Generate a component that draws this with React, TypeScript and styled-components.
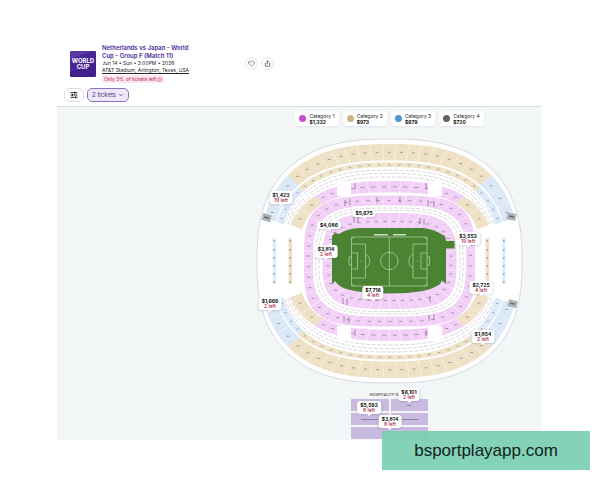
import React from "react";
import styled, { createGlobalStyle } from "styled-components";
import { ChevronDown, Heart, Info, SlidersHorizontal } from "lucide-react";

const GlobalStyle = createGlobalStyle`
  * { box-sizing: border-box; }
  body {
    margin: 0;
    background: #fff;
    color: #24242b;
    font-family: Inter, "Liberation Sans", sans-serif;
  }
  button { font: inherit; color: inherit; margin: 0; cursor: pointer; }
`;

/* ---------- stadium geometry ---------- */

const CX = 389.5;
const CY = 261;

type Curve = { a: number; b: number; n: number };
type Point = [number, number];

const curve = (a: number, b: number, n = 2.55): Curve => ({ a, b, n });

function at(c: Curve, deg: number): Point {
  const t = (deg * Math.PI) / 180;
  const cos = Math.cos(t);
  const sin = Math.sin(t);
  const r = Math.pow(
    Math.pow(Math.abs(cos) / c.a, c.n) + Math.pow(Math.abs(sin) / c.b, c.n),
    -1 / c.n
  );
  return [CX + r * cos, CY - r * sin];
}

function trace(c: Curve, from: number, to: number): Point[] {
  const steps = Math.max(2, Math.ceil(Math.abs(to - from) / 2));
  return Array.from({ length: steps + 1 }, (_, i) => at(c, from + ((to - from) * i) / steps));
}

const toPath = (pts: Point[]) =>
  "M" + pts.map(([x, y]) => `${x.toFixed(2)} ${y.toFixed(2)}`).join("L");

/** Angles that cut the curve into pieces of equal length. */
function splits(c: Curve, from: number, to: number, count: number): number[] {
  const steps = 360;
  const lengths = [0];
  let prev = at(c, from);
  for (let i = 1; i <= steps; i++) {
    const p = at(c, from + ((to - from) * i) / steps);
    lengths.push(lengths[i - 1] + Math.hypot(p[0] - prev[0], p[1] - prev[1]));
    prev = p;
  }
  const result: number[] = [];
  let k = 0;
  for (let i = 0; i <= count; i++) {
    const goal = (lengths[steps] * i) / count;
    while (k < steps && lengths[k] < goal) k++;
    result.push(from + ((to - from) * k) / steps);
  }
  return result;
}

const TAN = "#efe1c6";
const BLUE = "#dae8f8";
const PINK = "#f1cff6";

type BandProps = {
  outer: Curve;
  inner: Curve;
  from: number;
  to: number;
  count: number;
  fill: string;
  mark?: number;
};

function Band({ outer, inner, from, to, count, fill, mark = 3 }: BandProps) {
  const mid = curve((outer.a + inner.a) / 2, (outer.b + inner.b) / 2, (outer.n + inner.n) / 2);
  const cuts = splits(mid, from, to, count);
  return (
    <g>
      <path d={toPath([...trace(outer, from, to), ...trace(inner, to, from)]) + "Z"} fill={fill} />
      {cuts.slice(1, -1).map((d) => (
        <path key={d} d={toPath([at(outer, d), at(inner, d)])} stroke="#fff" strokeWidth=".6" opacity=".8" />
      ))}
      {cuts.slice(1).map((d, i) => {
        const [x, y] = at(mid, (d + cuts[i]) / 2);
        return (
          <path key={i} d={`M${x - mark / 2} ${y}h${mark}`} stroke="#71656f" strokeWidth="1" opacity=".55" />
        );
      })}
    </g>
  );
}

function Dashes({ c, from, to }: { c: Curve; from: number; to: number }) {
  return (
    <path
      d={toPath(trace(c, from, to))}
      fill="none"
      stroke="#cdcdd3"
      strokeWidth=".8"
      strokeDasharray="4 1.6"
    />
  );
}

const bowl = [curve(129, 117), curve(118, 100.5)];
const ledge = [curve(117, 98.5), curve(110, 94)];
const club = [curve(104, 80, 2.6), curve(91, 68.5, 2.9)];
const middle = [curve(85.5, 65.5, 3.6), curve(76.5, 55.5, 3.4)];
const lower = [curve(67, 48, 3.4), curve(56, 31, 3.4)];

const halves = [0, 180];

function Strip({ x, fill }: { x: number; fill: string }) {
  return (
    <g>
      <rect x={x} y="238" width="3.6" height="46" fill={fill} />
      {[240, 249, 257, 265, 273, 281].map((y) => (
        <rect key={y} x={x + 1} y={y} width="1.6" height="1.6" fill="#76808a" opacity=".7" />
      ))}
    </g>
  );
}

function StadiumDrawing() {
  return (
    <svg viewBox="256 138 267 246" width="267" height="246" role="img" aria-label="Stadium seating map">
      <path d={toPath(trace(curve(132.5, 122), 0, 360)) + "Z"} fill="#fff" stroke="#d2d5da" strokeWidth=".9" />
      {halves.map((h) => (
        <g key={h}>
          <Band outer={bowl[0]} inner={bowl[1]} from={h + 19} to={h + 40} count={3} fill={BLUE} />
          <Band outer={bowl[0]} inner={bowl[1]} from={h + 40} to={h + 140} count={17} fill={TAN} />
          <Band outer={bowl[0]} inner={bowl[1]} from={h + 140} to={h + 161} count={3} fill={BLUE} />
          <Band outer={ledge[0]} inner={ledge[1]} from={h + 19} to={h + 39} count={4} fill={BLUE} mark={2} />
          <Band outer={ledge[0]} inner={ledge[1]} from={h + 39} to={h + 141} count={19} fill={TAN} mark={2} />
          <Band outer={ledge[0]} inner={ledge[1]} from={h + 141} to={h + 161} count={4} fill={BLUE} mark={2} />
          <Dashes c={curve(109, 91)} from={h + 20} to={h + 160} />
          <Dashes c={curve(106.5, 87.5)} from={h + 20} to={h + 160} />
          <Dashes c={curve(104.5, 84)} from={h + 20} to={h + 160} />
          <Band outer={club[0]} inner={club[1]} from={h + 20} to={h + 41} count={2} fill={TAN} />
          <Band outer={club[0]} inner={club[1]} from={h + 41} to={h + 59} count={3} fill={PINK} />
          <Band outer={club[0]} inner={club[1]} from={h + 59} to={h + 121} count={8} fill={PINK} mark={4} />
          <Band outer={club[0]} inner={club[1]} from={h + 121} to={h + 139} count={3} fill={PINK} />
          <Band outer={club[0]} inner={club[1]} from={h + 139} to={h + 160} count={2} fill={TAN} />
        </g>
      ))}
      {[337, 428].map((x) =>
        [181, 326].map((y) => <rect key={`${x}-${y}`} x={x} y={y} width="14" height="15" fill="#fff" />)
      )}
      <Band outer={middle[0]} inner={middle[1]} from={0} to={360} count={46} fill={PINK} />
      <Dashes c={curve(73.5, 53, 3.4)} from={0} to={360} />
      <Dashes c={curve(70.5, 50.5, 3.4)} from={0} to={360} />
      <Band outer={lower[0]} inner={lower[1]} from={0} to={360} count={40} fill={PINK} />
      {[
        [355, 183], [426, 183], [355, 330], [426, 330], [345, 200], [350, 199], [377, 197], [400, 197],
        [428, 200], [434, 201], [344, 316], [349, 317], [429, 315], [434, 314], [354, 217], [358, 217],
        [420, 218], [424, 219], [343, 298], [347, 299], [430, 296],
      ].map(([x, y]) => (
        <path key={`${x}-${y}`} d={`M${x} ${y}v6`} stroke="#6f5577" strokeWidth="1" opacity=".6" />
      ))}

      <Strip x={272.5} fill="#dfeefa" />
      <Strip x={288.5} fill={TAN} />
      <Strip x={485.5} fill={TAN} />
      <Strip x={502} fill="#dfeefa" />
      {[
        [262, 214, 15],
        [507, 213, 10],
        [508, 300, 12],
      ].map(([x, y, r]) => (
        <g key={`${x}-${y}`} transform={`rotate(${r} ${x + 4} ${y + 4})`}>
          <rect x={x} y={y} width="9" height="7" fill="#aeb2b6" />
          <path d={`M${x + 2} ${y + 3.5}h5`} stroke="#666" strokeWidth="1.4" />
        </g>
      ))}

      <path
        d="M332 236L335 233L339 234Q346 229 359 228H424Q436 230 441 234L445 236L446 241H454.5V248.5H446V284L442 280.500L440 284Q433 289 423 291Q408 293.500 389 293.500Q367 293.500 355 291Q343 289 338 284.500L335 281L332 284Z"
        fill="#4a8332"
      />
      <path d="M374 234.800h14M393 234.800h13" stroke="#c9dfc1" strokeWidth="1.400" />
      <g fill="none" stroke="#b8d6ad" strokeWidth=".7">
        <path d="M351.500 237H427V286H351.500ZM389.300 237V286" />
        <circle cx="389.300" cy="261" r="8.700" />
        <path d="M351.500 244H365.500V278H351.500M351.500 253H357.500V269H351.500M351.500 257H349V265H351.500M365.500 254A8 8 0 0 1 365.500 268" />
        <path d="M427 244H413V278H427M427 253H421V269H427M427 257H429.500V265H427M413 254A8 8 0 0 0 413 268" />
        <path d="M351.500 239.500L354 237M424.500 237L427 239.500M351.500 283.500L354 286M424.500 286L427 283.500" />
      </g>
      <g fill="#b8d6ad">
        <circle cx="361" cy="261" r=".6" />
        <circle cx="417.500" cy="261" r=".6" />
      </g>
    </svg>
  );
}

function ShareIcon() {
  return (
    <svg width="7" height="7" viewBox="0 0 14 14" fill="none" stroke="#444" strokeWidth="1.4" strokeLinejoin="round">
      <path d="M4.500 6.500H2.500V12.500H11.500V6.500H9.500M7 9V1.500M4.500 4L7 1.500L9.500 4" />
    </svg>
  );
}

/* ---------- page ---------- */

const Page = styled.main`
  position: relative;
  padding: 44px 58px 40px 57px;
`;

const EventHeader = styled.header`
  display: flex;
  align-items: center;
  gap: 6px;
  padding-left: 13px;
`;

const Poster = styled.div`
  display: flex;
  flex-direction: column;
  justify-content: center;
  width: 26px;
  height: 26px;
  border-radius: 1px;
  background: linear-gradient(160deg, #5b3aa6 0 22%, #4a2796 22% 60%, #40208c 60%);
  color: #fff;
  font-size: 6px;
  font-weight: 700;
  line-height: 6px;
  text-align: center;
`;

const EventInfo = styled.div`
  width: 137px;
`;

const Title = styled.h1`
  max-width: 92px;
  margin: 0;
  color: #4b2a9b;
  font-size: 6px;
  font-weight: 600;
  line-height: 8px;
`;

const Detail = styled.div`
  font-size: 5px;
  line-height: 7px;
`;

const VenueLink = styled.a`
  color: inherit;
  text-decoration: underline;
`;

const Scarcity = styled.div`
  display: flex;
  align-items: center;
  gap: 1px;
  width: fit-content;
  margin-top: 1px;
  padding: 0 2px;
  border-radius: 2px;
  background: #fde7ec;
  color: #b3244c;
  font-size: 5px;
  line-height: 8px;
`;

const Actions = styled.div`
  display: flex;
  gap: 3px;
`;

const RoundButton = styled.button`
  display: grid;
  place-items: center;
  width: 13px;
  height: 13px;
  padding: 0;
  border: 1px solid #e6e6ea;
  border-radius: 50%;
  background: #fff;
  color: #444;
`;

const Filters = styled.div`
  display: flex;
  gap: 3px;
  padding: 5px 0 4px 7px;
`;

const FilterButton = styled.button<{ $active?: boolean }>`
  display: flex;
  align-items: center;
  justify-content: center;
  gap: 2px;
  width: ${(p) => (p.$active ? "42px" : "20px")};
  height: 14px;
  padding: 0;
  border: 1px solid ${(p) => (p.$active ? "#8a74bd" : "#dedee3")};
  border-radius: 5px;
  background: ${(p) => (p.$active ? "#efe8fb" : "#fff")};
  color: ${(p) => (p.$active ? "#4b3a80" : "#222")};
  font-size: 6px;
  line-height: 8px;
`;

const MapPanel = styled.section`
  display: flex;
  justify-content: flex-end;
  padding: 4px 19px 1px 0;
  border-top: 1px solid #d9dee1;
  background: #f2f6f7;
`;

const Stage = styled.div`
  position: relative;
  display: flex;
  flex-direction: column;
  align-items: center;
  width: 267px;
`;

const Legend = styled.ul`
  display: flex;
  gap: 4px;
  margin: 0 0 12px;
  padding: 0;
  list-style: none;
`;

const LegendItem = styled.li`
  display: flex;
  align-items: center;
  gap: 3px;
  height: 15px;
  padding: 0 4px;
  border-radius: 3px;
  background: #fff;
  box-shadow: 0 1px 2px rgba(30, 40, 60, 0.08);
  font-size: 5px;
  line-height: 6px;
`;

const Dot = styled.span<{ $color: string }>`
  width: 7px;
  height: 7px;
  border-radius: 50%;
  background: ${(p) => p.$color};
`;

const LegendPrice = styled.strong`
  display: block;
  color: #111;
`;

const HospitalityTitle = styled.h2`
  margin: 7px 0 0;
  padding-right: 9px;
  font-family: Roboto, sans-serif;
  font-size: 4px;
  font-weight: 400;
  line-height: 8px;
`;

const Hospitality = styled.div`
  display: grid;
  grid-template-columns: 1fr 1fr;
  grid-auto-rows: 12px;
  gap: 2px;
  width: 77px;
`;

const Suite = styled.div<{ $wide?: boolean }>`
  display: grid;
  place-items: center;
  grid-column: ${(p) => (p.$wide ? "1 / -1" : "auto")};
  background: #c9bbe0;
`;

const SuiteMark = styled.span<{ $short?: boolean }>`
  width: ${(p) => (p.$short ? "4px" : "18px")};
  height: 1px;
  background: #8c80a5;
`;

const Pin = styled.button<{ $x: number; $y: number }>`
  position: absolute;
  left: ${(p) => p.$x}px;
  top: ${(p) => p.$y}px;
  transform: translateX(-50%);
  padding: 1px 3px;
  border: 0;
  border-radius: 3px;
  background: #fff;
  box-shadow: 0 1px 2px rgba(30, 30, 50, 0.16);
  color: #111;
  font-size: 5px;
  font-weight: 700;
  line-height: 6px;
  text-align: center;
  white-space: nowrap;

  &::after {
    content: "";
    position: absolute;
    left: 50%;
    bottom: -2px;
    transform: translateX(-50%);
    border: solid transparent;
    border-width: 2px 2px 0;
    border-top-color: #fff;
  }
`;

const Left = styled.span`
  display: block;
  color: #b3244c;
  font-weight: 500;
  line-height: 5px;
`;

const Banner = styled.footer`
  position: absolute;
  right: 10px;
  bottom: 10px;
  width: 208px;
  background: rgba(123, 207, 178, 0.93);
  color: #10231d;
  font-family: "Liberation Sans", Arial, sans-serif;
  font-size: 17px;
  line-height: 39px;
  text-align: center;
`;

const categories = [
  { name: "Category 1", price: "$1,332", color: "#c44fd0" },
  { name: "Category 2", price: "$973", color: "#cbb684" },
  { name: "Category 3", price: "$679", color: "#4f97cc" },
  { name: "Category 4", price: "$720", color: "#626468" },
];

const pins = [
  { x: 25, y: 80, price: "$1,423", left: "19 left" },
  { x: 108, y: 98, price: "$5,675" },
  { x: 73, y: 110, price: "$4,086" },
  { x: 70, y: 134, price: "$3,814", left: "2 left" },
  { x: 212, y: 121, price: "$3,553", left: "19 left" },
  { x: 117, y: 175, price: "$7,716", left: "4 left" },
  { x: 14, y: 186, price: "$1,666", left: "2 left" },
  { x: 225, y: 170, price: "$2,725", left: "4 left" },
  { x: 227, y: 219, price: "$1,854", left: "2 left" },
  { x: 153, y: 277, price: "$6,101", left: "2 left" },
  { x: 113, y: 290, price: "$5,593", left: "8 left" },
  { x: 134, y: 304, price: "$3,814", left: "8 left" },
];

export default function App() {
  return (
    <>
      <GlobalStyle />
      <Page>
        <EventHeader>
          <Poster>
            <span>WORLD</span>
            <span>CUP</span>
          </Poster>
          <EventInfo>
            <Title>Netherlands vs Japan - World Cup - Group F (Match 11)</Title>
            <Detail>Jun 14 • Sun • 3:00PM • 2026</Detail>
            <Detail>
              <VenueLink href="#venue">AT&amp;T Stadium, Arlington, Texas, USA</VenueLink>
            </Detail>
            <Scarcity>
              Only 3% of tickets left <Info size={5} />
            </Scarcity>
          </EventInfo>
          <Actions>
            <RoundButton aria-label="Save event">
              <Heart size={7} />
            </RoundButton>
            <RoundButton aria-label="Share event">
              <ShareIcon />
            </RoundButton>
          </Actions>
        </EventHeader>
        <Filters>
          <FilterButton aria-label="Filters">
            <SlidersHorizontal size={8} strokeWidth={3} />
          </FilterButton>
          <FilterButton $active>
            2 tickets <ChevronDown size={6} strokeWidth={3} />
          </FilterButton>
        </Filters>
        <MapPanel>
          <Stage>
            <Legend>
              {categories.map((c) => (
                <LegendItem key={c.name}>
                  <Dot $color={c.color} />
                  <span>
                    {c.name}
                    <LegendPrice>{c.price}</LegendPrice>
                  </span>
                </LegendItem>
              ))}
            </Legend>
            <StadiumDrawing />
            <HospitalityTitle>HOSPITALITY OF</HospitalityTitle>
            <Hospitality>
              <Suite />
              <Suite>
                <SuiteMark $short />
              </Suite>
              <Suite>
                <SuiteMark />
              </Suite>
              <Suite>
                <SuiteMark />
              </Suite>
              <Suite $wide />
            </Hospitality>
            {pins.map((p) => (
              <Pin key={`${p.x}-${p.y}`} $x={p.x} $y={p.y}>
                {p.price}
                {p.left && <Left>{p.left}</Left>}
              </Pin>
            ))}
          </Stage>
        </MapPanel>
        <Banner>bsportplayapp.com</Banner>
      </Page>
    </>
  );
}
